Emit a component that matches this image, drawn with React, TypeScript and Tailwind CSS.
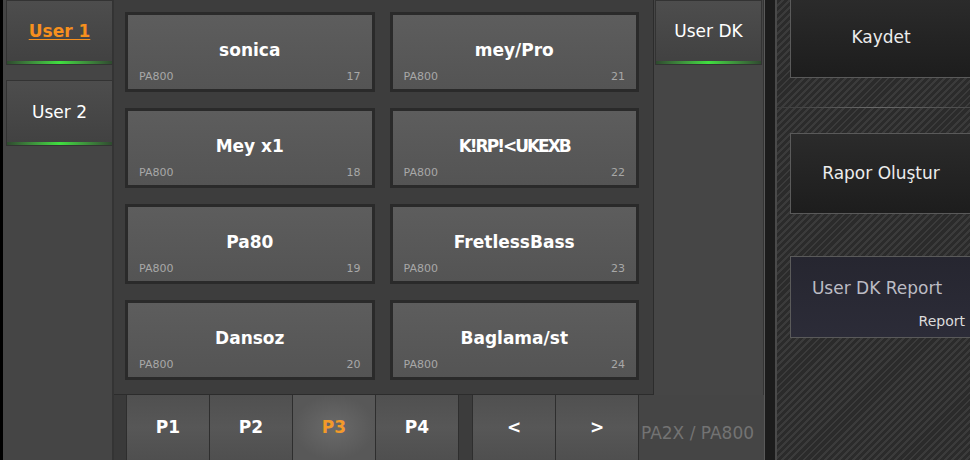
import React from "react";

const presets = [
  { name: "sonica", no: 17 },
  { name: "mey/Pro", no: 21 },
  { name: "Mey x1", no: 18 },
  { name: "K!RP!<UKEXB", no: 22, tight: true },
  { name: "Pa80", no: 19 },
  { name: "FretlessBass", no: 23 },
  { name: "Dansoz", no: 20 },
  { name: "Baglama/st", no: 24 },
];

const pages = ["P1", "P2", "P3", "P4"];

const GreenBar = () => (
  <div className="h-[3px] w-full bg-gradient-to-r from-[#2f4a2f] via-[#3fe03f] to-[#2f4a2f]" />
);

const Tab = ({ children, className = "" }: { children: React.ReactNode; className?: string }) => (
  <div className={"flex w-[107px] flex-col border border-[#333] bg-gradient-to-b from-[#4d4d4d] to-[#414141] " + className}>
    <div className="flex flex-1 items-center justify-center pt-[2px]">{children}</div>
    <GreenBar />
  </div>
);

const PresetCard = ({ name, no, tight }: { name: string; no: number; tight?: boolean }) => (
  <div className="flex h-[80px] flex-col border-[3px] border-[#2a2a2a] bg-gradient-to-b from-[#5d5d5d] to-[#545454] px-[11px]">
    <div
      className={
        "flex flex-1 items-end justify-center pb-[3px] text-[17px] font-bold text-white " +
        (tight ? "tracking-[-2px]" : "")
      }
    >
      {name}
    </div>
    <div className="flex h-[23px] items-center justify-between text-[11px] text-[#a8a8a8]">
      <span>PA800</span>
      <span>{no}</span>
    </div>
  </div>
);

const PageButton = ({ label, active }: { label: string; active?: boolean }) => (
  <div
    className={
      "flex w-[83px] items-center justify-center border-r border-[#2e2e2e] text-[17px] font-bold " +
      (active
        ? "bg-[radial-gradient(ellipse_at_center,#6a6a6a_0%,#585858_70%)] text-[#f39a2a]"
        : "bg-gradient-to-b from-[#505050] via-[#575757] to-[#4f4f4f] text-white")
    }
  >
    {label}
  </div>
);

const SideButton = ({ children, className = "" }: { children: React.ReactNode; className?: string }) => (
  <div className={"relative flex w-[182px] shrink-0 items-center justify-center border border-[#5a5a5a] text-[17px] " + className}>
    {children}
  </div>
);

export default function App() {
  return (
    <div className="flex h-[460px] w-[970px] overflow-hidden bg-[#3b3b3b] font-['DejaVu_Sans',Verdana,sans-serif]">
      <div className="w-[3px] bg-black" />

      {/* left: user tabs */}
      <div className="flex w-[111px] flex-col border-r-2 border-[#343434] bg-[#454545] pl-[3px]">
        <Tab className="h-[65px]">
          <span className="text-[17px] font-bold text-[#f7901e] underline underline-offset-2">User 1</span>
        </Tab>
        <Tab className="mt-[15px] h-[66px]">
          <span className="text-[17px] text-white">User 2</span>
        </Tab>
      </div>

      {/* middle */}
      <div className="flex w-[650px] flex-col">
        <div className="flex h-[395px]">
          <div className="grid w-[540px] grid-cols-2 content-start gap-x-[15px] gap-y-[16px] border-r border-b border-[#2c2c2c] bg-[#3d3d3d] pt-[12px] pl-[11px] pr-[14px]">
            {presets.map((p) => (
              <PresetCard key={p.no} name={p.name} no={p.no} tight={p.tight} />
            ))}
          </div>
          <div className="flex w-[110px] flex-col border-r border-[#343434] bg-[#464646] pl-[1px]">
            <Tab className="h-[65px]">
              <span className="text-[17px] text-white">User DK</span>
            </Tab>
          </div>
        </div>
        <div className="flex h-[65px] bg-[#454545]">
          <div className="w-[12px] bg-[#3a3a3a]" />
          <div className="flex border-l border-[#2e2e2e]">
            {pages.map((p) => (
              <PageButton key={p} label={p} active={p === "P3"} />
            ))}
          </div>
          <div className="w-[13px] bg-[#3c3c3c]" />
          <div className="flex border-l border-[#2e2e2e]">
            <PageButton label="<" />
            <PageButton label=">" />
          </div>
          <div className="flex flex-1 items-center pl-[2px] pt-[12px] text-[17px] text-[#737373]">PA2X / PA800</div>
        </div>
      </div>

      {/* divider */}
      <div className="w-[13px] border-l border-[#5a5a5a] border-r-2 border-r-[#4a4a4a] bg-[#1c1c1c]" />

      {/* right: actions */}
      <div className="flex flex-1 flex-col overflow-hidden bg-[repeating-linear-gradient(135deg,#2b2b2b_0px,#2b2b2b_3px,#3b3b3b_3px,#3b3b3b_5px)] pl-[13px]">
        <SideButton className="-mt-[2px] h-[80px] bg-gradient-to-b from-[#2b2b2b] to-[#1d1d1d] text-[#ececec]">Kaydet</SideButton>
        <div className="-ml-[13px] mt-[29px] h-px bg-gradient-to-r from-[#3a3a3a] via-[#6a6a6a] to-[#4a4a4a]" />
        <SideButton className="mt-[25px] h-[81px] bg-gradient-to-b from-[#2b2b2b] to-[#1d1d1d] text-[#ececec]">Rapor Oluştur</SideButton>
        <SideButton className="mt-[42px] h-[82px] bg-gradient-to-b from-[#262630] to-[#2c2c38] text-[#bcbcc4]">
          <span className="-mt-[16px] -ml-[8px]">User DK Report</span>
          <span className="absolute right-[6px] bottom-[5px] text-[14px] text-[#dcdcdc]">Report</span>
        </SideButton>
      </div>
    </div>
  );
}
